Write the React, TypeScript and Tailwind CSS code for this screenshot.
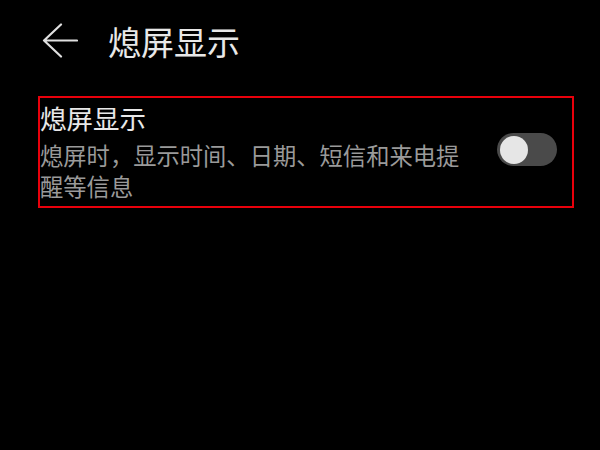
import React, { useState } from 'react';

const font = { fontFamily: '"Noto Sans CJK SC", "Noto Sans", sans-serif' };

const BackArrow: React.FC = () => (
  <svg width="36" height="36" viewBox="0 0 36 36" fill="none" className="text-[#e0e0e0]">
    <path d="M19 1.5 L2 17.5 L19 33.5 M2 17.5 H35" stroke="currentColor" strokeWidth="2.2" strokeLinecap="round" strokeLinejoin="round" />
  </svg>
);

const Toggle: React.FC<{ on: boolean; onChange: () => void }> = ({ on, onChange }) => (
  <button
    onClick={onChange}
    className={`relative w-[60px] h-[33px] rounded-full shrink-0 ${on ? 'bg-[#007dff]' : 'bg-[#4a4a4a]'}`}
  >
    <span
      className={`absolute top-[2.5px] w-[28px] h-[28px] rounded-full bg-[#e6e6e6] ${on ? 'left-[29px]' : 'left-[3px]'}`}
    />
  </button>
);

export default function App() {
  const [enabled, setEnabled] = useState(false);

  return (
    <div className="w-[600px] h-[450px] bg-black overflow-hidden" style={font}>
      <div className="flex items-center h-[82px] pl-[42px]">
        <BackArrow />
        <h1 className="ml-[30px] text-[33px] leading-none text-[#e8e8e8]">熄屏显示</h1>
      </div>

      <div className="ml-[38px] mt-[14px] w-[536px] h-[112px] border-2 border-[#e8000b] flex items-center">
        <div className="w-[424px] pb-[3px]">
          <div className="text-[26.5px] leading-[38px] mb-[3px] text-[#e8e8e8]">熄屏显示</div>
          <div className="text-[23.3px] leading-[31px] text-[#9a9a9a]">
            熄屏时，显示时间、日期、短信和来电提醒等信息
          </div>
        </div>
        <div className="ml-auto mr-[15px]">
          <Toggle on={enabled} onChange={() => setEnabled(!enabled)} />
        </div>
      </div>
    </div>
  );
}
